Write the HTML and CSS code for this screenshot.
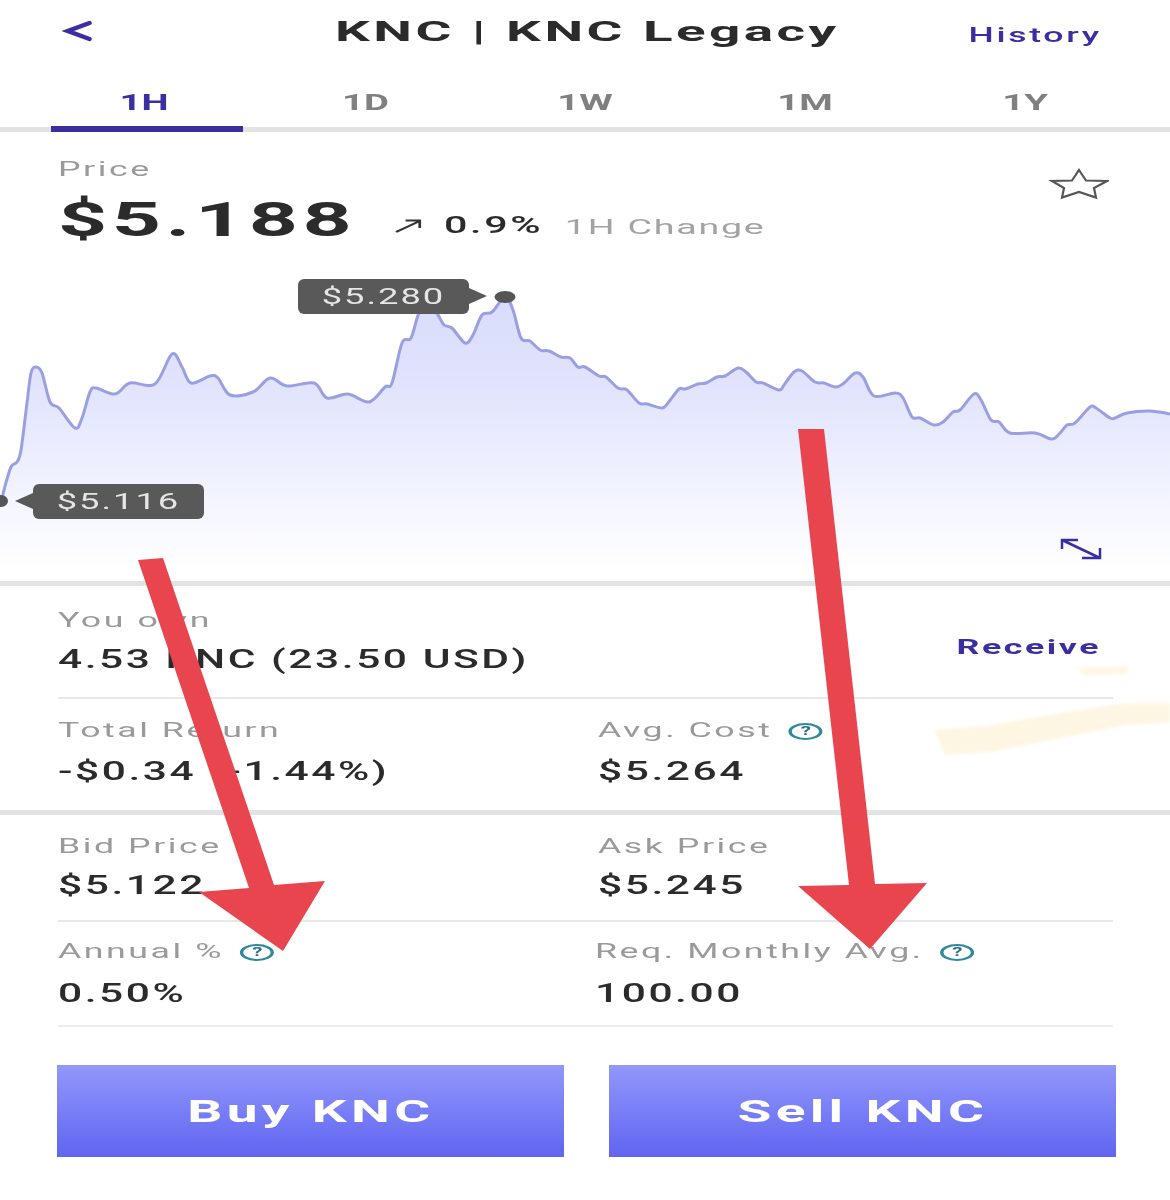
FILE: index.html
```html
<!DOCTYPE html>
<html lang="en">
<head>
    <meta charset="UTF-8">
    <meta name="viewport" content="width=device-width, initial-scale=1.0">
    <title>KNC | KNC Legacy</title>
    <link rel="stylesheet" href="styles.css">
</head>
<body>
    <header class="top">
        <svg class="back" width="32" height="26" viewBox="0 0 32 26"><path d="M27.500 5 L6 13 L27.500 21" fill="none" stroke="#3a2fa0" stroke-width="4.500" stroke-linecap="round" stroke-linejoin="miter"/></svg>
        <h1 class="title"><span class="wide-c">KNC | KNC Legacy</span></h1>
        <a class="history"><span class="wide-r">History</span></a>
    </header>

    <nav class="tabs">
        <div class="tab active"><span class="wide-c">1H</span></div>
        <div class="tab"><span class="wide-c">1D</span></div>
        <div class="tab"><span class="wide-c">1W</span></div>
        <div class="tab"><span class="wide-c">1M</span></div>
        <div class="tab"><span class="wide-c">1Y</span></div>
    </nav>

    <section class="price">
        <div>
            <div class="label wide">Price</div>
            <div class="price-row wide">
                <span class="price-now">$5.188</span>
                <svg class="trend" width="15" height="14" viewBox="0 0 17 14" preserveAspectRatio="none"><path d="M1 13 L16 2 M7 1.500 H16 V9" fill="none" stroke="#333" stroke-width="1.800"/></svg>
                <span class="price-pct">0.9%</span>
                <span class="price-note">1H Change</span>
            </div>
        </div>
        <svg class="star" width="62" height="32" viewBox="0 0 62 32"><path d="M32 2 L39 12.500 L60 13 L47 20 L49 29.500 L32 24 L15 29.500 L17 20 L5 13 L25 12.500 Z" fill="none" stroke="#555" stroke-width="2.200"/></svg>
    </section>

    <section class="chart">
        <svg class="chart-svg" width="1170" height="321" viewBox="0 260 1170 321">
            <defs>
                <linearGradient id="area" gradientUnits="userSpaceOnUse" x1="0" y1="297" x2="0" y2="570">
                    <stop offset="0" stop-color="#d8dbfb"/>
                    <stop offset="0.400" stop-color="#e4e6fd"/>
                    <stop offset="0.750" stop-color="#f4f5ff"/>
                    <stop offset="1" stop-color="#ffffff"/>
                </linearGradient>
            </defs>
            <path id="chartArea" fill="url(#area)"/>
            <path id="chartLine" fill="none" stroke="#9a9fe2" stroke-width="3"/>
            <ellipse cx="505" cy="297" rx="10.500" ry="6" fill="#555"/>
            <ellipse cx="1" cy="501" rx="7" ry="6" fill="#555"/>
            <path d="M469 288 L487 296 L469 304 Z" fill="#595959"/>
            <path d="M33 493 L15 501 L33 509 Z" fill="#595959"/>
        </svg>
        <div class="tip tip-high"><span class="wide-c">$5.280</span></div>
        <div class="tip tip-low"><span class="wide-c">$5.116</span></div>
        <svg class="expand" width="42" height="22" viewBox="0 0 42 22"><path d="M2 2 L40 20 M18 2 H2 V11 M22 20 H40 V10" fill="none" stroke="#3a2fa0" stroke-width="2.500"/></svg>
    </section>

    <section class="stats">
        <div class="row row-own">
            <div>
                <div class="label wide">You own</div>
                <div class="value wide">4.53 KNC (23.50 USD)</div>
            </div>
            <a class="receive"><span class="wide-r">Receive</span></a>
        </div>
        <div class="row row-return">
            <div class="cell">
                <div class="label wide">Total Return</div>
                <div class="value wide">-$0.34 (-1.44%)</div>
            </div>
            <div class="cell">
                <div class="label wide">Avg. Cost <span class="help">?</span></div>
                <div class="value wide">$5.264</div>
            </div>
        </div>
    </section>

    <section class="stats stats-market">
        <div class="row row-bid">
            <div class="cell">
                <div class="label wide">Bid Price</div>
                <div class="value wide">$5.122</div>
            </div>
            <div class="cell">
                <div class="label wide">Ask Price</div>
                <div class="value wide">$5.245</div>
            </div>
        </div>
        <div class="row row-annual">
            <div class="cell">
                <div class="label wide">Annual % <span class="help">?</span></div>
                <div class="value wide">0.50%</div>
            </div>
            <div class="cell cell-req">
                <div class="label wide">Req. Monthly Avg. <span class="help">?</span></div>
                <div class="value wide">100.00</div>
            </div>
        </div>
    </section>

    <div class="actions">
        <button class="btn"><span class="wide-c">Buy KNC</span></button>
        <button class="btn"><span class="wide-c">Sell KNC</span></button>
    </div>

    <svg class="markup" width="1170" height="1200" viewBox="0 0 1170 1200">
        <path class="smudge" d="M934 730 L991 725 L1067 712 L1125 703 L1170 703 V723 L1125 725 L1067 737 L991 752 L945 755 Z" fill="#fdf6e3"/>
        <path class="smudge" d="M1075 668 L1129 666 L1127 674 L1085 676 Z" fill="#fdf7e6"/>
        <path d="M138 560 L163 558 L274 885 L325 881 L283 951 L199 892 L249 888 Z" fill="#e8454e"/>
        <path d="M798 429 L824 429 L875 884 L927 883 L870 949 L798 886 L849 885 Z" fill="#e8454e"/>
    </svg>

    <script src="chart.js"></script>
</body>
</html>
```

FILE: styles.css
```css
*{
    box-sizing: border-box;
}
body{
    position: relative;
    margin: 0;
    width: 1170px;
    height: 1200px;
    overflow: hidden;
    background-color: #fff;
    font-family: Roboto, "Liberation Sans", sans-serif;
    color: #2b2b2b;
}
/* the capture is stretched sideways, so text gets stretched too */
.wide,.wide-c,.wide-r{
    transform: scaleX(1.7);
}
.wide{
    width: fit-content;
    transform-origin: left center;
}
.wide-c,.wide-r{
    display: inline-block;
}
.wide-r{
    transform-origin: right center;
}
.top{
    height: 80px;
    padding: 0 68px 16px 62px;
    display: grid;
    grid-template-columns: 1fr auto 1fr;
    align-items: center;
}
.back{
    display: block;
    margin-top: -3px;
}
.title{
    margin: 0;
    padding-left: 11px;
    font-size: 27px;
    font-weight: 700;
    letter-spacing: 1.700px;
}
.title .wide-c{
    transform: scaleX(2.03);
}
.history{
    margin-top: 5px;
    text-align: right;
    color: #3a2fa0;
    font-size: 20px;
    font-weight: 500;
    letter-spacing: 1.500px;
}
.history .wide-r{
    transform: scaleX(1.78);
}
.tabs{
    height: 52px;
    padding: 0 35px;
    display: grid;
    grid-template-columns: repeat(5, 1fr);
    border-bottom: 5px solid #e3e3e3;
}
.tab{
    height: 52px;
    padding-top: 8px;
    margin: 0 14px;
    text-align: center;
    font-size: 22px;
    font-weight: 700;
    line-height: 30px;
    color: #808080;
}
.tab .wide-c{
    transform: scaleX(1.74);
}
.tab.active{
    margin-left: 16px;
    margin-right: 12px;
    padding-right: 5px;
    color: #3a2fa0;
    border-bottom: 6px solid #3a2fa0;
}
.price{
    height: 128px;
    padding: 24px 61px 0 58px;
    display: flex;
    justify-content: space-between;
    align-items: flex-start;
}
.label{
    height: 26px;
    line-height: 26px;
    font-size: 21px;
    letter-spacing: 1.500px;
    color: #9a9a9a;
    white-space: nowrap;
}
.price-row{
    margin-top: 9px;
    display: flex;
    align-items: center;
    height: 56px;
    white-space: nowrap;
    transform: scaleX(1.79);
}
.price-now{
    font-size: 48px;
    font-weight: 700;
    letter-spacing: 2.500px;
}
.trend{
    margin: 13px 0 0 21px;
}
.price-pct{
    margin: 13px 0 0 13px;
    font-size: 23px;
    font-weight: 500;
    letter-spacing: 1.500px;
}
.price-note{
    margin: 15px 0 0 12px;
    font-size: 21px;
    letter-spacing: 1px;
    color: #a3a3a3;
}
.star{
    margin-top: 12px;
}
.chart{
    position: relative;
    height: 326px;
    border-bottom: 5px solid #e3e3e3;
}
.chart-svg{
    display: block;
}
.tip{
    position: absolute;
    width: 171px;
    height: 35px;
    line-height: 35px;
    border-radius: 6px;
    background-color: #595959;
    color: #e6e6e6;
    font-size: 22px;
    letter-spacing: 1.200px;
    text-align: center;
}
.tip .wide-c{
    transform: scaleX(1.65);
}
.tip-high{
    left: 298px;
    top: 19px;
}
.tip-low{
    left: 33px;
    top: 224px;
}
.expand{
    position: absolute;
    left: 1060px;
    top: 278px;
}
.stats{
    height: 229px;
    border-bottom: 5px solid #e3e3e3;
    padding: 0 57px 0 58px;
}
.stats-market{
    height: 212px;
    border-bottom: none;
}
.row{
    display: grid;
    grid-template-columns: 540px 1fr;
    border-bottom: 2px solid #e8e8e8;
}
.row:last-child{
    border-bottom: none;
}
.value{
    font-size: 25px;
    font-weight: 500;
    line-height: 30px;
    letter-spacing: 1.500px;
    white-space: nowrap;
}
.row-own{
    height: 113px;
    padding-top: 21px;
    grid-template-columns: 1fr auto;
}
.row-own .value{
    margin-top: 12px;
}
.receive{
    margin: 28px 12px 0 0;
    color: #3a2fa0;
    font-size: 21px;
    font-weight: 700;
    letter-spacing: 1.500px;
}
.row-return{
    height: 111px;
    padding-top: 18px;
}
.row-return .value{
    margin-top: 14px;
}
.row-bid{
    height: 107px;
    padding-top: 18px;
}
.row-bid .value{
    margin-top: 12px;
}
.row-annual{
    height: 105px;
    padding-top: 16px;
    border-bottom: 2px solid #ededed;
}
.row-annual:last-child{
    border-bottom: 2px solid #ededed;
}
.row-annual .value{
    margin-top: 15px;
}
.cell-req{
    margin-left: -3px;
}
.help{
    display: inline-block;
    width: 20px;
    height: 17px;
    margin-left: 3px;
    border: 2px solid #2e8a9a;
    border-radius: 50%;
    color: #2e6f8a;
    font-size: 12px;
    font-weight: 700;
    line-height: 13px;
    letter-spacing: 0;
    text-align: center;
    vertical-align: 2px;
}
.actions{
    margin-top: 38px;
    padding: 0 54px 0 57px;
    display: grid;
    grid-template-columns: 507px 507px;
    column-gap: 45px;
}
.btn{
    height: 92px;
    border: none;
    background: linear-gradient(#9297fb, #5f65f0);
    color: #fff;
    font-family: inherit;
    font-size: 32px;
    font-weight: 700;
    letter-spacing: 2.500px;
}
.btn .wide-c{
    transform: scaleX(1.72);
}
.markup{
    position: absolute;
    left: 0;
    top: 0;
    pointer-events: none;
}
.smudge{
    filter: blur(1.500px);
}
```

FILE: chart.js
```js
var points = [
    [0,506],[2,500],[4,490],[11,467],[17,462],[21,450],[27,403],[31,373],[36,367],[42,373],[50,402],[59,408],[75,428],[82,418],[90,392],[96,388],
    [115,394],[130,383],[155,384],[172,354],[182,367],[191,383],[210,376],[218,378],[230,395],[253,392],[270,378],[287,386],[314,383],[327,398],
    [348,394],[369,402],[385,387],[392,383],[402,343],[411,338],[419,313],[429,305],[438,315],[444,325],[452,328],[465,343],[473,335],[482,315],
    [492,312],[505,297],[513,310],[521,338],[530,341],[540,350],[549,351],[561,357],[570,358],[578,367],[585,367],[599,376],[606,377],[618,388],
    [627,390],[639,403],[647,404],[662,408],[668,403],[679,389],[685,389],[698,384],[706,383],[717,377],[725,376],[738,368],[746,372],[756,382],
    [763,383],[779,390],[784,385],[794,372],[802,371],[815,382],[824,383],[836,387],[844,383],[855,373],[863,377],[874,396],[895,393],[903,398],
    [912,417],[920,418],[934,425],[943,422],[953,412],[960,410],[974,394],[981,400],[991,420],[999,422],[1010,433],[1035,433],[1052,439],[1060,433],
    [1067,425],[1075,423],[1090,407],[1096,408],[1110,418],[1115,418],[1127,413],[1150,411],[1170,414]
];

// catmull-rom through the points
function smoothPath(pts) {
    var d = "M" + pts[0][0] + " " + pts[0][1];
    for (var i = 0; i < pts.length - 1; i++) {
        var p0 = pts[i - 1] || pts[i];
        var p1 = pts[i];
        var p2 = pts[i + 1];
        var p3 = pts[i + 2] || p2;
        var c1x = p1[0] + (p2[0] - p0[0]) / 6;
        var c1y = p1[1] + (p2[1] - p0[1]) / 6;
        var c2x = p2[0] - (p3[0] - p1[0]) / 6;
        var c2y = p2[1] - (p3[1] - p1[1]) / 6;
        d += " C" + c1x + " " + c1y + " " + c2x + " " + c2y + " " + p2[0] + " " + p2[1];
    }
    return d;
}

var line = smoothPath(points);
document.querySelector("#chartLine").setAttribute("d", line);
document.querySelector("#chartArea").setAttribute("d", line + " L1170 581 L0 581 Z");
```
